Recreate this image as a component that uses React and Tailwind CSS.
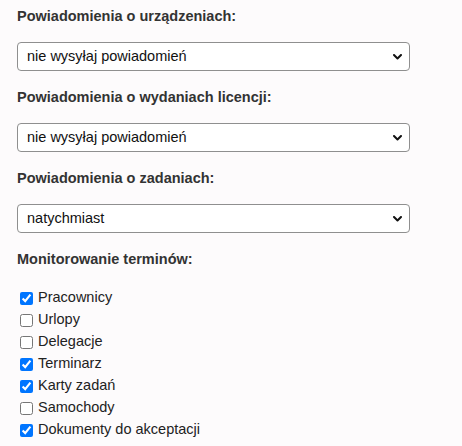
import React from "react";

const font = { fontFamily: '"Liberation Sans", Arial, sans-serif' };

function Chevron() {
  return (
    <svg width="9" height="6" viewBox="0 0 9 6" className="shrink-0">
      <path d="M1 1 L4.5 4.5 L8 1" fill="none" stroke="#111" strokeWidth="2" strokeLinecap="round" strokeLinejoin="round" />
    </svg>
  );
}

function Select({ value }) {
  return (
    <div className="flex h-[29px] w-[393px] items-center justify-between rounded-[4px] border border-[#8f8f8f] bg-white pl-[9px] pr-[7px] text-[14.5px] text-[#111]">
      <span>{value}</span>
      <Chevron />
    </div>
  );
}

function Label({ children }) {
  return <div className="h-[16px] text-[14.5px] font-bold leading-[16px] text-[#333]">{children}</div>;
}

const items = [
  ["Pracownicy", true],
  ["Urlopy", false],
  ["Delegacje", false],
  ["Terminarz", true],
  ["Karty zadań", true],
  ["Samochody", false],
  ["Dokumenty do akceptacji", true],
];

export default function App() {
  return (
    <div className="min-h-[446px] w-full bg-[#fdfbfc] pl-[17px] pt-[8px]" style={font}>
      <div className="flex flex-col">
        <Label>Powiadomienia o urządzeniach:</Label>
        <div className="mt-[18px]"><Select value="nie wysyłaj powiadomień" /></div>
        <div className="mt-[18px]"><Label>Powiadomienia o wydaniach licencji:</Label></div>
        <div className="mt-[18px]"><Select value="nie wysyłaj powiadomień" /></div>
        <div className="mt-[18px]"><Label>Powiadomienia o zadaniach:</Label></div>
        <div className="mt-[18px]"><Select value="natychmiast" /></div>
        <div className="mt-[18px]"><Label>Monitorowanie terminów:</Label></div>
        <div className="mt-[20px] flex flex-col">
          {items.map(([t, c]) => (
            <label key={t} className="flex h-[22px] items-center text-[14.5px] text-[#222]">
              <input type="checkbox" defaultChecked={c} className="ml-[3px] mr-[5px] h-[13px] w-[13px]" />
              <span>{t}</span>
            </label>
          ))}
        </div>
      </div>
    </div>
  );
}
